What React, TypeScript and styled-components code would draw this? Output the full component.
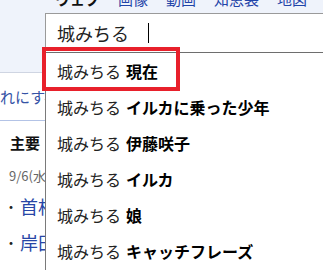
import React from 'react';
import styled, { createGlobalStyle } from 'styled-components';

const GlobalStyle = createGlobalStyle`
  html, body {
    margin: 0;
    padding: 0;
    background: #ffffff;
    overflow: hidden;
  }
  body {
    font-family: "Noto Sans CJK JP", "Noto Sans", sans-serif;
  }
`;

const Page = styled.div`
  position: relative;
  width: 323px;
  height: 270px;
  overflow: hidden;
  background: #ffffff;
`;

const Header = styled.div`
  height: 73px;
  background: #eff3fb;
  border-bottom: 1px solid #cfd5e2;
  box-sizing: border-box;
`;

const TabRow = styled.div`
  display: flex;
  align-items: flex-end;
  gap: 18px;
  height: 13px;
  padding: 0 0 7px 55px;
  box-sizing: border-box;
  overflow: hidden;
`;

const Tab = styled.span<{ $active?: boolean }>`
  font-size: 15px;
  line-height: 1;
  white-space: nowrap;
  color: ${p => (p.$active ? '#111111' : '#1f44a8')};
  font-weight: ${p => (p.$active ? 700 : 400)};
`;

const SearchBox = styled.div`
  margin-left: 45px;
  height: 39px;
  background: #ffffff;
  border-top: 1px solid #9a9a9a;
  border-left: 1px solid #9a9a9a;
  box-sizing: border-box;
  display: flex;
  align-items: center;
  padding-left: 11px;
  font-size: 18px;
  color: #222222;
  white-space: nowrap;
`;

const Caret = styled.span`
  display: inline-block;
  width: 1px;
  height: 20px;
  background: #000000;
  margin-left: 19px;
`;

const LinkRow = styled.div`
  height: 47px;
  border-bottom: 1px solid #b3c3e6;
  display: flex;
  align-items: center;
  font-size: 15px;
  color: #3553a6;
  white-space: nowrap;
  overflow: hidden;
`;

const SectionTitle = styled.div`
  padding: 11px 0 0 10px;
  height: 34px;
  font-size: 15px;
  font-weight: 700;
  color: #111111;
  line-height: 22px;
`;

const DateLine = styled.div`
  padding-left: 9px;
  font-size: 13px;
  color: #666666;
  line-height: 20px;
  white-space: nowrap;
`;

const NewsList = styled.ul`
  list-style: none;
  margin: 2px 0 0;
  padding: 0 0 0 4px;
`;

const NewsItem = styled.li`
  height: 36px;
  display: flex;
  align-items: center;
  font-size: 18px;
  color: #2746a6;
  white-space: nowrap;
`;

const Bullet = styled.span`
  flex: none;
  color: #222222;
  font-size: 14px;
  width: 16px;
`;

const Dropdown = styled.ul`
  position: absolute;
  top: 52px;
  left: 45px;
  right: 0;
  bottom: 0;
  margin: 0;
  padding: 0;
  list-style: none;
  background: #ffffff;
  border-top: 1px solid #6e6e6e;
  border-left: 1px solid #7a7a7a;
`;

const Suggestion = styled.li`
  position: relative;
  height: 36px;
  display: flex;
  align-items: center;
  padding-left: 11px;
  font-size: 16px;
  color: #222222;
  white-space: nowrap;
`;

const Query = styled.span`
  margin-right: 5px;
`;

const Extra = styled.b`
  font-weight: 700;
  color: #000000;
`;

const Highlight = styled.span`
  position: absolute;
  top: -6px;
  left: -4px;
  width: 138px;
  height: 44px;
  border: 4px solid #e8202b;
  box-sizing: border-box;
  pointer-events: none;
`;

const tabs = ['ウェブ', '画像', '動画', '知恵袋', '地図'];
const suggestions = ['現在', 'イルカに乗った少年', '伊藤咲子', 'イルカ', '娘', 'キャッチフレーズ'];
const news = ['首相', '岸田', '財務'];

export default function App() {
  return (
    <Page>
      <GlobalStyle />
      <Header>
        <TabRow>
          {tabs.map((t, i) => (
            <Tab key={t} $active={i === 0}>{t}</Tab>
          ))}
        </TabRow>
        <SearchBox>
          城みちる
          <Caret />
        </SearchBox>
      </Header>
      <LinkRow>れにすべて</LinkRow>
      <SectionTitle>主要</SectionTitle>
      <DateLine>9/6(水)</DateLine>
      <NewsList>
        {news.map(n => (
          <NewsItem key={n}>
            <Bullet>・</Bullet>
            {n}
          </NewsItem>
        ))}
      </NewsList>
      <Dropdown>
        {suggestions.map((s, i) => (
          <Suggestion key={s}>
            {i === 0 && <Highlight />}
            <Query>城みちる</Query>
            <Extra>{s}</Extra>
          </Suggestion>
        ))}
      </Dropdown>
    </Page>
  );
}
